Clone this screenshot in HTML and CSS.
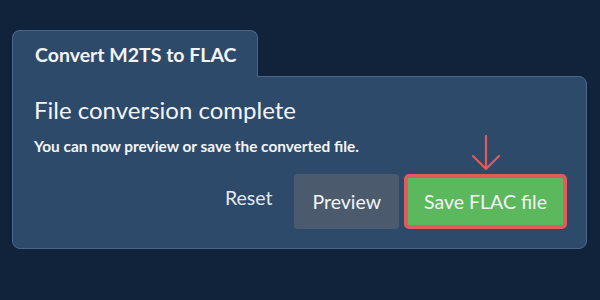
FILE: index.html
```html
<!DOCTYPE html>
<html lang="en">
<head>
  <meta charset="UTF-8" />
  <meta name="viewport" content="width=device-width, initial-scale=1.0" />
  <title>Convert M2TS to FLAC</title>
  <link rel="stylesheet" href="styles.css">
</head>

<body>
  <div class="converter">
    <div class="tabs">
      <div class="tab">Convert M2TS to FLAC</div>
    </div>

    <div class="panel">
      <h2>File conversion complete</h2>
      <p class="note">You can now preview or save the converted file.</p>

      <div class="actions">
        <button class="btn btn-link">Reset</button>
        <button class="btn btn-gray">Preview</button>
        <div class="save-wrap">
          <svg class="arrow" width="30" height="36" viewBox="0 0 30 36">
            <path d="M15 1 L15 34 M2 21 L15 34 L28 21" fill="none" stroke="#e05c5c" stroke-width="2.2" stroke-linecap="round" stroke-linejoin="round"/>
          </svg>
          <button class="btn btn-save">Save FLAC file</button>
        </div>
      </div>
    </div>
  </div>
</body>
</html>
```

FILE: styles.css
```css
body {
  font-family: Lato, "Open Sans", Arial, sans-serif;
  background: #11233a;
  color: #f2f4f7;
  margin: 0;
  padding: 30px 13px 0 12px;
}

.tabs {
  display: flex;
}

.tab {
  position: relative;
  z-index: 1;
  width: 246px;
  height: 47px;
  box-sizing: border-box;
  padding: 12px 0 0 22px;
  margin-bottom: -1px;
  background: #2d4a6a;
  border: 1px solid #4a6789;
  border-bottom: none;
  border-radius: 8px 8px 0 0;
  font-size: 19.5px;
  font-weight: bold;
  line-height: 23px;
}

.panel {
  background: #2d4a6a;
  border: 1px solid #4a6789;
  border-radius: 0 8px 8px 8px;
  padding: 19px 19px 19px 21px;
}

h2 {
  margin: 0;
  font-size: 24px;
  font-weight: normal;
  line-height: 28px;
}

.note {
  margin: 13px 0 0;
  font-size: 15.4px;
  font-weight: bold;
  line-height: 19px;
}

.actions {
  display: flex;
  justify-content: flex-end;
  align-items: center;
  gap: 5px;
  margin-top: 18px;
}

.btn {
  font-family: inherit;
  font-size: 19.5px;
  color: #f2f4f7;
  height: 55px;
  padding: 0 18px;
  border: none;
  border-radius: 4px;
  cursor: pointer;
}

.btn-link {
  background: transparent;
  padding: 0 17px 8px 18px;
  color: #e4e9ef;
}

.btn-gray {
  background: #4b5b6d;
}

.save-wrap {
  position: relative;
}

.btn-save {
  background: #5cb85c;
  border: 4px solid #e05c5c;
  border-radius: 5px;
  padding: 0 16px;
}

.arrow {
  position: absolute;
  left: 50%;
  bottom: 100%;
  margin-left: -15px;
  margin-bottom: 3px;
}
```
